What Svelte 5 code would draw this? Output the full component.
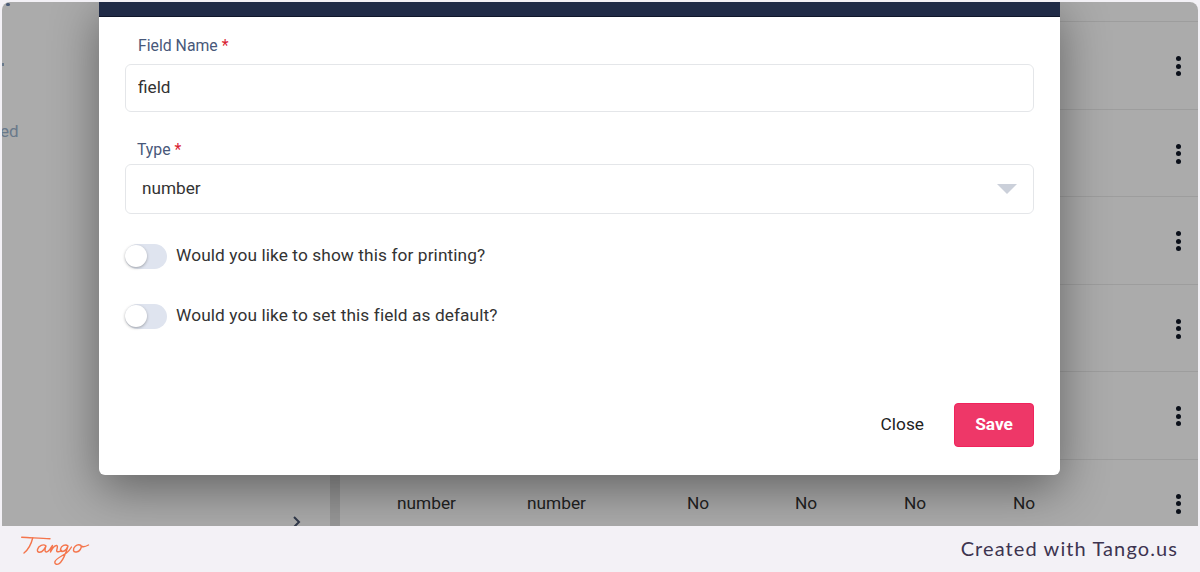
<script>
  const rows = [1, 2, 3, 4, 5, 6];
</script>

<div class="frame">
  <div class="shot">
    <aside class="side">
      <span class="spot"></span>
      <span class="tick"></span>
      <span class="ed">ed</span>
      <svg class="chev" width="10" height="12" viewBox="0 0 10 12"><path d="M2 1l5 5-5 5" fill="none" stroke="#4a5670" stroke-width="2" /></svg>
    </aside>
    <div class="table">
      {#each rows as r}
        <div class="row">
          {#if r === 6}
            <span class="c1">number</span>
            <span class="c2">number</span>
            <span class="c3">No</span>
            <span class="c4">No</span>
            <span class="c5">No</span>
            <span class="c6">No</span>
          {/if}
          <span class="kebab"><i></i><i></i><i></i></span>
        </div>
      {/each}
    </div>
    <div class="veil"></div>

    <div class="modal">
      <div class="modal-head"></div>
      <div class="modal-body">
        <label class="lbl" for="fname">Field Name <b>*</b></label>
        <input id="fname" class="field" value="field" />
        <div class="lbl type">Type <b>*</b></div>
        <div class="field select">
          <span>number</span>
          <svg width="20" height="10" viewBox="0 0 20 10"><path d="M0 0h20l-10 10z" fill="#cbd0da" /></svg>
        </div>
        <div class="toggle first"><span class="track"><span class="knob"></span></span><span class="txt">Would you like to show this for printing?</span></div>
        <div class="toggle"><span class="track"><span class="knob"></span></span><span class="txt">Would you like to set this field as default?</span></div>
        <div class="actions">
          <button class="close">Close</button>
          <button class="save">Save</button>
        </div>
      </div>
    </div>
  </div>

  <footer class="foot">
    <svg class="logo" width="70" height="36" viewBox="0 0 70 36" fill="none" stroke="#f4754c" stroke-width="1.4" stroke-linecap="round" stroke-linejoin="round">
      <path d="M1.700 6.300c9 .5 19 .8 28.300 1.400" />
      <path d="M12.700 7C11.500 12 9 18 4 22" />
      <path d="M26 15c-2.500-2.500-7.500-.5-8.500 3.500-.8 3.500 3.500 3.800 6 .5l2.500-4c-1 2.500-1.800 6 .5 6 2.500 0 4-4 6-6.500-.8 2-1.800 4.500-2 6.500 1.500-3 4-6.800 6.200-6.500 1.500 .3 .2 3.500 0 5-.2 2 3 1.500 5-.3" />
      <path d="M48 15c-2.500-2.200-6.800-.3-7.500 3.200-.6 3 3 3.200 5.500 .3l2-3.500c-1.500 5-3.500 12-7.500 16.500-2.500 2.800-6.500 2.300-5.500-1 .8-2.800 7-5.500 11.500-8.500 2-1.400 3.500-3.500 5-6" />
      <path d="M60 14c-3.500-1-7 2.500-6.500 5.500.5 2.500 5 1.800 6.800-1 1.500-2.300 1-4.500-.3-4.500 1.500 2 5 2 8.500 0" />
    </svg>
    <span class="credit">Created with Tango.us</span>
  </footer>
</div>

<style>
  :global(body) {
    margin: 0;
    background: #f3f1f6;
  }
  .frame {
    width: 1200px;
    height: 572px;
    display: flex;
    flex-direction: column;
    background: #f3f1f6;
    border-radius: 0 0 10px 10px;
    overflow: hidden;
    font-family: Roboto, "Liberation Sans", sans-serif;
  }
  .shot {
    position: relative;
    display: flex;
    height: 524px;
    margin: 2px 2px 0;
    background: #fff;
    border-radius: 8px 8px 0 0;
    overflow: hidden;
    flex: none;
  }
  .side {
    position: relative;
    width: 328px;
    flex: none;
    color: #9db5cf;
  }
  .ed {
    position: absolute;
    left: -2px;
    top: 119px;
    font-size: 17px;
  }
  .spot {
    position: absolute;
    left: 4px;
    top: 1px;
    width: 4px;
    height: 3px;
    border-radius: 2px;
    background: #6f86b0;
  }
  .tick {
    position: absolute;
    left: 0;
    top: 61px;
    width: 2px;
    height: 3px;
    background: #9db5cf;
  }
  .chev {
    position: absolute;
    left: 290px;
    top: 514px;
  }
  .table {
    margin-left: 10px;
    flex: 1;
    padding-top: 19px;
    background: #fff;
  }
  .row {
    position: relative;
    height: 87.6px;
    box-sizing: border-box;
    border-top: 1px solid #ebebeb;
    color: #333;
    font-size: 17.3px;
  }
  .row span:not(.kebab) {
    position: absolute;
    top: 33px;
    line-height: 20px;
  }
  .c1 { left: 57px; }
  .c2 { left: 187px; }
  .c3 { left: 347px; }
  .c4 { left: 455px; }
  .c5 { left: 564px; }
  .c6 { left: 673px; }
  .kebab {
    position: absolute;
    left: 836px;
    top: 34px;
    display: flex;
    flex-direction: column;
    gap: 2.5px;
  }
  .kebab i {
    width: 5px;
    height: 5px;
    border-radius: 50%;
    background: #111827;
  }
  .veil {
    position: absolute;
    inset: 0;
    background: rgba(0, 0, 0, 0.33);
  }
  .side::after {
    content: "";
    position: absolute;
    left: 328px;
    top: 0;
    bottom: 0;
    width: 10px;
    background: #e2e2e2;
  }
  .modal {
    position: absolute;
    left: 97px;
    top: -2px;
    width: 961px;
    height: 475px;
    background: #fff;
    border-radius: 0 0 6px 6px;
    box-shadow: 0 14px 48px rgba(0, 0, 0, 0.42);
    overflow: hidden;
  }
  .modal-head {
    height: 17px;
    background: #202b47;
    border-bottom: 1px solid #10162a;
    box-sizing: border-box;
  }
  .modal-body {
    position: relative;
    padding: 0 26px;
  }
  .lbl {
    display: block;
    margin: 19px 0 0 13px;
    color: #48587a;
    font-size: 15.8px;
    line-height: 20px;
  }
  .lbl b {
    color: #d92232;
    font-weight: 400;
  }
  .type {
    margin: 28px 0 0 12px;
  }
  .field {
    display: block;
    box-sizing: border-box;
    width: 100%;
    height: 48px;
    margin-top: 8px;
    padding: 0 12px 2px;
    border: 1px solid #e4e6e9;
    border-radius: 6px;
    background: #fff;
    color: #333;
    font: 17.2px Roboto, "Liberation Sans", sans-serif;
    outline: none;
  }
  .select {
    display: flex;
    align-items: center;
    justify-content: space-between;
    height: 50px;
    margin-top: 4px;
    padding: 0 16px;
  }
  .select span {
    margin-top: -3px;
  }
  .toggle {
    display: flex;
    align-items: center;
    gap: 9px;
    height: 25px;
    margin-top: 35px;
    color: #333;
    font-size: 17.3px;
    letter-spacing: 0.1px;
  }
  .toggle.first {
    margin-top: 30px;
  }
  .txt {
    margin-top: -3px;
  }
  .track {
    position: relative;
    width: 42px;
    height: 25px;
    border-radius: 13px;
    background: #dfe4ef;
    flex: none;
  }
  .knob {
    position: absolute;
    left: 0;
    top: 1px;
    width: 22px;
    height: 22px;
    border-radius: 50%;
    background: #fff;
    box-shadow: 0 1px 3px rgba(0, 0, 0, 0.3);
  }
  .actions {
    display: flex;
    justify-content: flex-end;
    align-items: center;
    gap: 30px;
    margin-top: 74px;
  }
  .actions button {
    font: 17.3px Roboto, "Liberation Sans", sans-serif;
    border: 0;
    cursor: pointer;
  }
  .close {
    background: none;
    color: #222;
    padding: 0 0 2px;
  }
  .actions .save {
    width: 80px;
    height: 44px;
    padding: 0 0 2px;
    background: #ee3768;
    border: 1px solid #f0235c;
    border-radius: 4px;
    color: #fff;
    font-weight: 700;
  }
  .foot {
    flex: 1;
    display: flex;
    align-items: center;
    justify-content: space-between;
    padding: 0 22px 0 20px;
  }
  .credit {
    margin-top: -2px;
    color: #3d3450;
    font-family: Lato, "Open Sans", sans-serif;
    font-size: 20px;
    letter-spacing: 1.1px;
  }
</style>
